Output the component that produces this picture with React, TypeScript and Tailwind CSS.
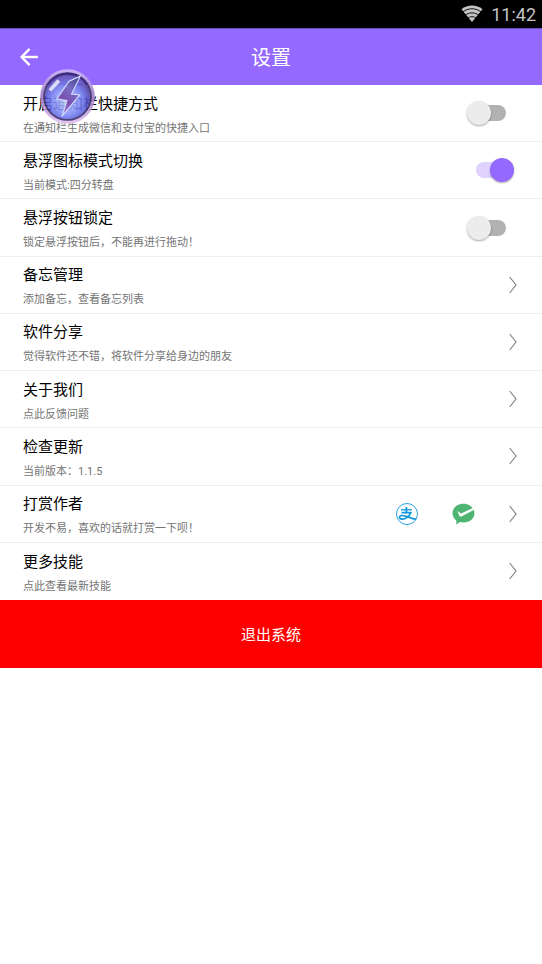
import { useState } from 'react'

interface SettingItem {
  id: string
  title: string
  description: string
  type: 'switch' | 'link'
  showPay?: boolean
}

const items: SettingItem[] = [
  { id: 'notification', title: '开启通知栏快捷方式', description: '在通知栏生成微信和支付宝的快捷入口', type: 'switch' },
  { id: 'mode', title: '悬浮图标模式切换', description: '当前模式:四分转盘', type: 'switch' },
  { id: 'lock', title: '悬浮按钮锁定', description: '锁定悬浮按钮后，不能再进行拖动！', type: 'switch' },
  { id: 'memo', title: '备忘管理', description: '添加备忘，查看备忘列表', type: 'link' },
  { id: 'share', title: '软件分享', description: '觉得软件还不错，将软件分享给身边的朋友', type: 'link' },
  { id: 'about', title: '关于我们', description: '点此反馈问题', type: 'link' },
  { id: 'update', title: '检查更新', description: '当前版本：1.1.5', type: 'link' },
  { id: 'donate', title: '打赏作者', description: '开发不易，喜欢的话就打赏一下呗！', type: 'link', showPay: true },
  { id: 'skills', title: '更多技能', description: '点此查看最新技能', type: 'link' }
]

function WifiIcon() {
  return (
    <svg width="22" height="18" viewBox="0 0 22 18" fill="none" aria-hidden="true">
      <path d="M11 17 L0.5 4.2 C6.5 -0.8 15.5 -0.8 21.5 4.2 Z" fill="#c4c4c4" />
      <path d="M1.6 7.2 C7 2.6 15 2.6 20.4 7.2" stroke="#000" strokeWidth="0.9" />
      <path d="M4 10.4 C8 7 14 7 18 10.4" stroke="#000" strokeWidth="0.9" />
      <path d="M6.4 13.3 C9 11.2 13 11.2 15.6 13.3" stroke="#000" strokeWidth="0.9" />
    </svg>
  )
}

function BackIcon() {
  return (
    <svg width="18" height="18" viewBox="0 0 18 18" fill="none" stroke="#fff" strokeWidth="2.4" aria-hidden="true">
      <path d="M17.8 9 H1.8" />
      <path d="M9.6 0.9 L1.6 9 L9.6 17.1" />
    </svg>
  )
}

function ChevronIcon() {
  return (
    <svg width="8" height="18" viewBox="0 0 8 18" fill="none" stroke="#7d7d7d" strokeWidth="1.1" aria-hidden="true">
      <path d="M0.7 1 L7 9 L0.7 17" />
    </svg>
  )
}

function AlipayIcon() {
  return (
    <svg width="22" height="22" viewBox="0 0 22 22" fill="none" stroke="#1296db" aria-label="支付宝">
      <circle cx="11" cy="11" r="10.5" strokeWidth="0.9" />
      <path d="M5 6.8 H16" strokeWidth="1.3" />
      <path d="M10.4 4 V9.4" strokeWidth="1.8" />
      <path d="M5.6 9.6 H14.8 C13.2 13.4 9.4 16.4 6 16.2 C2.8 16 2.7 12.9 5.6 12.5 C9.6 12.1 13.4 15 20.2 16.4" strokeWidth="1.7" />
    </svg>
  )
}

function WechatPayIcon() {
  return (
    <svg width="23" height="22" viewBox="0 0 23 22" fill="none" aria-label="微信支付">
      <path d="M11.4 0.8 C17.8 0.8 22.4 5 22.4 10.3 C22.4 15.6 17.8 19.6 11.4 19.6 C10.2 19.6 9 19.4 7.9 19.1 L4.4 21.4 L4.3 17.5 C1.9 15.8 0.5 13.2 0.5 10.3 C0.5 5 5 0.8 11.4 0.8 Z" fill="#4fb573" />
      <path d="M5.4 8 L9.1 10.4 L21.4 4.8 L22.6 6.6 L9.4 13.4 C8.5 13.8 7.8 13.6 7.5 12.9 Z" fill="#fff" />
    </svg>
  )
}

function FloatingBall() {
  return (
    <svg viewBox="0 0 54 54" className="size-full" aria-hidden="true">
      <defs>
        <radialGradient id="ball" cx="0.48" cy="0.6" r="0.58">
          <stop offset="0" stopColor="#c4dcff" />
          <stop offset="0.35" stopColor="#8f9cff" />
          <stop offset="0.7" stopColor="#5a60e0" />
          <stop offset="0.88" stopColor="#4a3aa6" />
          <stop offset="1" stopColor="#2f2270" />
        </radialGradient>
        <linearGradient id="bolt" x1="0.8" y1="0" x2="0.3" y2="1">
          <stop offset="0" stopColor="#4a4690" />
          <stop offset="0.35" stopColor="#7a6cc4" />
          <stop offset="0.65" stopColor="#7a4fb0" />
          <stop offset="1" stopColor="#a78bdc" />
        </linearGradient>
        <linearGradient id="ring" x1="0" y1="0" x2="0" y2="1">
          <stop offset="0" stopColor="#cdb8f4" />
          <stop offset="0.5" stopColor="#9c78c4" />
          <stop offset="1" stopColor="#dfbff0" />
        </linearGradient>
      </defs>
      <circle cx="27" cy="27" r="25" fill="none" stroke="url(#ring)" strokeWidth="3.6" opacity="0.9" />
      <circle cx="27" cy="27" r="23" fill="url(#ball)" stroke="#2e2362" strokeWidth="1.6" opacity="0.85" />
      <path d="M8 22 C9 13 17 6 27 6 C36 6 42 10 45 17 C34 10 20 14 8 22 Z" fill="#8f84dc" opacity="0.45" />
      <path d="M8.5 20 L17 10 L20 12.5 L11 22 Z" fill="#fff" opacity="0.75" />
      <path d="M39.5 7 L28.5 12 L16.5 29.5 L26.5 31 L21.5 46.5 L39 25.5 L31 24.5 Z" fill="url(#bolt)" stroke="#cfdcff" strokeWidth="1.1" />
    </svg>
  )
}

export default function App() {
  const [switches, setSwitches] = useState<Record<string, boolean>>({
    notification: false,
    mode: true,
    lock: false
  })

  const toggle = (id: string) => {
    setSwitches(prev => ({ ...prev, [id]: !prev[id] }))
  }

  return (
    <div className="relative min-h-screen bg-white font-[Roboto,'Noto_Sans_CJK_SC',sans-serif]">
      <div className="flex h-7 items-center justify-end gap-2 bg-black pr-1.5 text-[18px] leading-7 text-[#c4c4c4]">
        <WifiIcon />
        <span className="pt-0.5">11:42</span>
      </div>

      <header className="grid h-[57px] grid-cols-[1fr_auto_1fr] items-center border-t border-[#6a4bb8] bg-[#9469ff] px-5">
        <button type="button" aria-label="返回" className="justify-self-start">
          <BackIcon />
        </button>
        <h1 className="pt-0.5 text-xl text-white">设置</h1>
      </header>

      <ul className="grid min-h-[515px] auto-rows-fr">
        {items.map(item => (
          <li key={item.id} className="border-b border-[#eeeeee] last:border-b-0">
            {item.type === 'switch' ? (
              <label className="flex h-full items-center justify-between pr-9 pl-[23px]">
                <span className="flex flex-col gap-[7px] pt-1">
                  <span className="text-[15px] leading-5 text-black">{item.title}</span>
                  <span className="text-[11px] leading-4 text-[#757575]">{item.description}</span>
                </span>
                <input
                  type="checkbox"
                  role="switch"
                  checked={switches[item.id]}
                  onChange={() => toggle(item.id)}
                  className="relative h-4 w-[30px] appearance-none rounded-full bg-[#b2b2b2] before:absolute before:-top-1 before:-left-[9px] before:size-6 before:rounded-full before:bg-[#ececec] before:shadow-[0_1px_2px_rgba(0,0,0,0.35)] checked:bg-[#dfd2ff] checked:before:left-[14px] checked:before:bg-[#9469ff]"
                />
              </label>
            ) : (
              <a href={`#${item.id}`} className="flex h-full items-center justify-between pr-[25px] pl-[23px]">
                <span className="flex flex-col gap-[7px] pt-1">
                  <span className="text-[15px] leading-5 text-black">{item.title}</span>
                  <span className="text-[11px] leading-4 text-[#757575]">{item.description}</span>
                </span>
                <span className="flex items-center gap-[34px]">
                  {item.showPay && <AlipayIcon />}
                  {item.showPay && <WechatPayIcon />}
                  <ChevronIcon />
                </span>
              </a>
            )}
          </li>
        ))}
      </ul>

      <button type="button" className="h-[68px] w-full bg-[#ff0000] pt-0.5 text-[15px] text-white">
        退出系统
      </button>

      <button type="button" aria-label="悬浮按钮" className="absolute top-[69px] left-10 size-[55px] rounded-full">
        <FloatingBall />
      </button>
    </div>
  )
}
